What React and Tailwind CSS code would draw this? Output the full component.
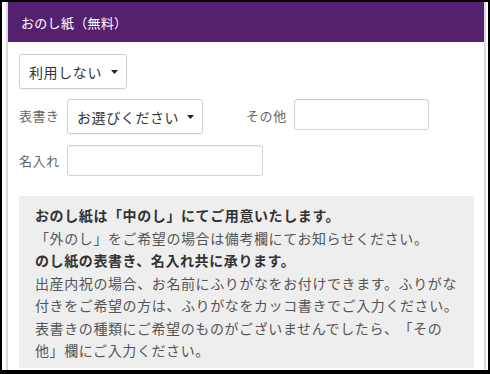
import React from 'react'

const font = { fontFamily: '"Noto Sans CJK JP", "Noto Sans", sans-serif' }

function Caret() {
  return (
    <svg width="7" height="4" viewBox="0 0 7 4" className="shrink-0">
      <path d="M0 0h7L3.5 4z" fill="#222" />
    </svg>
  )
}

function FakeSelect({ label, width }) {
  return (
    <div className={`${width} h-[35px] border border-[#cfcfcf] rounded-[3px] bg-white flex items-center pl-[9px] pr-[8px] shadow-[0_1px_1px_rgba(0,0,0,0.04)]`}>
      <span className="flex-1 text-[14px] tracking-[0.6px] text-[#333] leading-none whitespace-nowrap">{label}</span>
      <Caret />
    </div>
  )
}

function Field({ width }) {
  return <div className={`${width} h-[31px] border border-[#d2d2d2] rounded-[3px] bg-white shadow-[inset_0_1px_1px_rgba(0,0,0,0.05)]`} />
}

export default function App() {
  return (
    <div className="w-[490px] h-[374px] bg-black pt-[2px] pl-[2px] pr-[5px] pb-[4px] flex [text-spacing-trim:space-all]" style={font}>
      <div className="flex-1 bg-white pl-[4px] pr-[2px] flex">
        <div className="flex-1 border-x-2 border-[#dadada] flex flex-col">
          <div className="h-[40px] bg-[#55216f] px-[13px] flex items-center text-white text-[13px] tracking-[0.3px] leading-none">
            おのし紙（無料）
          </div>

          <div className="pl-[11px] pr-[10px] pt-[12px] flex flex-col">
            <FakeSelect label="利用しない" width="w-[108px]" />

            <div className="flex items-start mt-[10px]">
              <div className="w-[48px] h-[32px] flex items-center text-[13px] tracking-[0.4px] text-[#666] leading-none">表書き</div>
              <FakeSelect label="お選びください" width="w-[136px]" />
              <div className="ml-[43px] w-[48px] h-[32px] flex items-center text-[13px] tracking-[0.6px] text-[#666] leading-none">その他</div>
              <Field width="w-[135px]" />
            </div>

            <div className="flex items-center mt-[11px]">
              <div className="w-[48px] text-[13px] tracking-[0.6px] text-[#666] leading-none">名入れ</div>
              <Field width="w-[196px]" />
            </div>

            <div className="mt-[20px] h-[172px] bg-[#eeeeee] px-[16px] pt-[8px] text-[14px] tracking-[0.6px] leading-[22.5px] text-[#555] whitespace-nowrap">
              <div className="font-bold text-[#333]">おのし紙は「中のし」にてご用意いたします。</div>
              <div>「外のし」をご希望の場合は備考欄にてお知らせください。</div>
              <div className="font-bold text-[#333]">のし紙の表書き、名入れ共に承ります。</div>
              <div>出産内祝の場合、お名前にふりがなをお付けできます。ふりがな</div>
              <div>付きをご希望の方は、ふりがなをカッコ書きでご入力ください。</div>
              <div>表書きの種類にご希望のものがございませんでしたら、「その</div>
              <div>他」欄にご入力ください。</div>
            </div>
          </div>
        </div>
      </div>
    </div>
  )
}
